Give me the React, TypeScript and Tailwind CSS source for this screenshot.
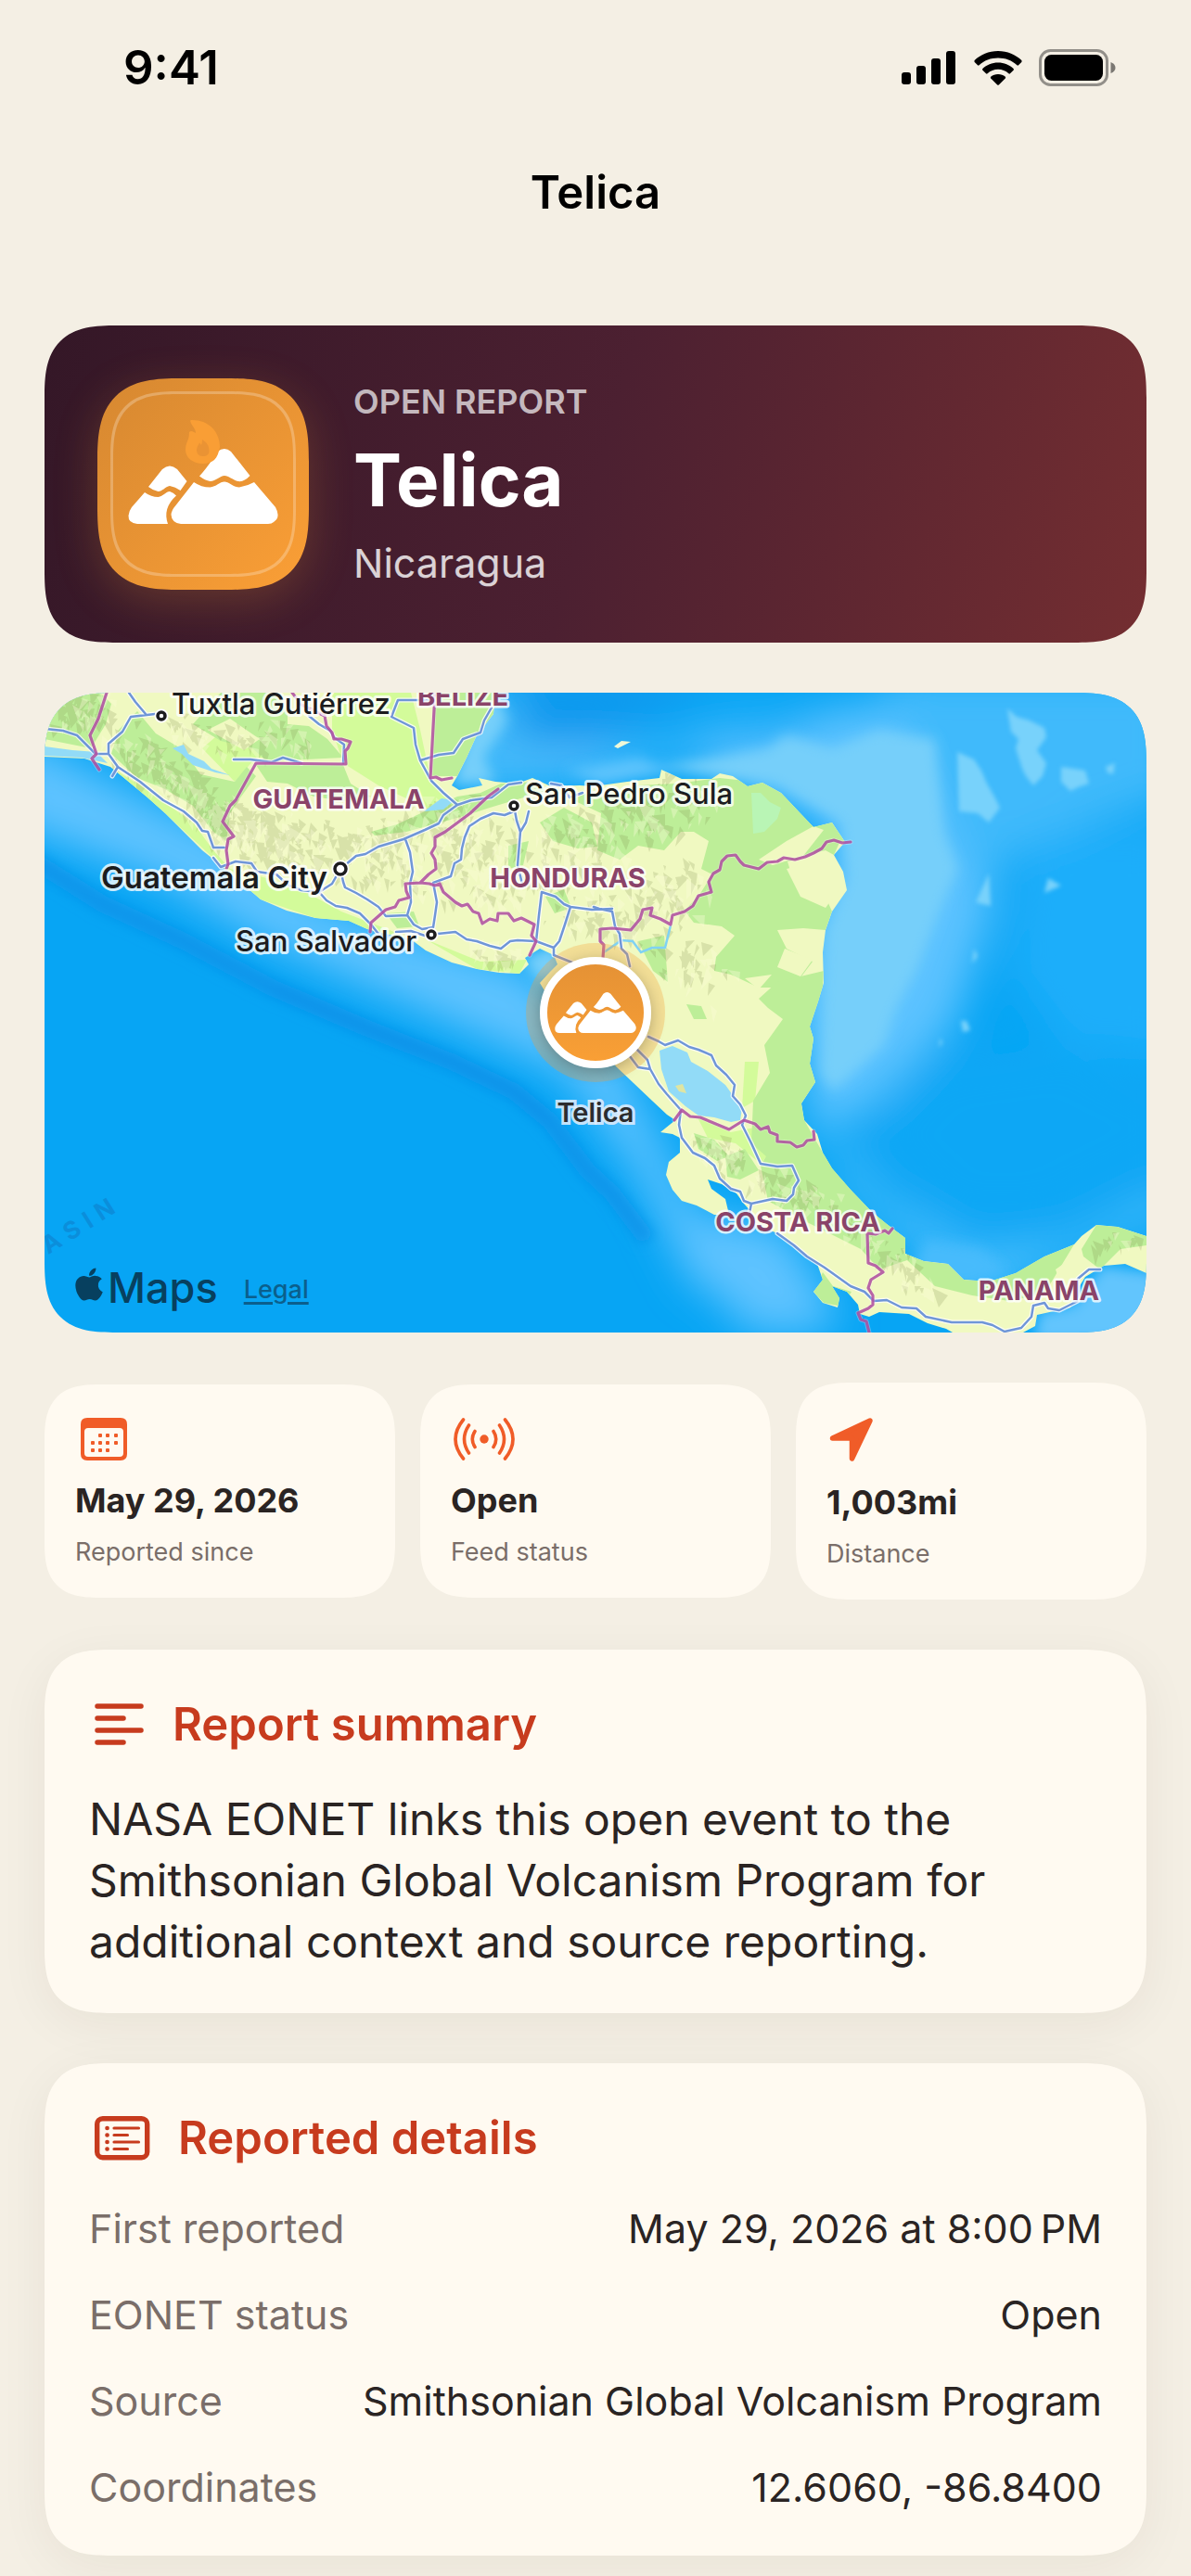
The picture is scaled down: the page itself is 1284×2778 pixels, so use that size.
// src/App.tsx
import React from 'react';
import { FaApple } from 'react-icons/fa';

type Point = [number, number];

const LAND =
  'M0 0V69L43 71L71 80L87 93L111 113L130 130L150 150L170 170L190 186L213 206L233 223L261 235L292 243L328 246L348 255L368 260L395 266L411 278L439 291L466 298L490 302L512 303L522 293L518 286L534 276L549 283L553 293L545 301L534 313L540 323L570 345L595 372L616 403L635 421L655 440L671 455L680 461L664 474L677 476L685 480V496L673 506L670 520L677 536L687 548L703 553L722 563L738 563L734 546L719 535L715 525L730 530L746 540L754 551L762 560L766 573L790 583L813 600L833 616L839 633L829 646L839 658L855 663L857 653L849 640L865 646L877 660L879 670L889 673L900 668L932 670L952 680L972 686L979 690H1055L1068 683L1070 671L1106 663L1114 643L1122 630L1142 618L1165 616L1188 626V586L1157 576L1134 574L1118 586L1110 595L1078 608L1047 626L1019 635L991 633L974 616L948 613L928 605V588L908 573L892 560L869 536L849 513L839 496L833 476L819 461L816 443L831 420L825 400L829 373L825 360L834 333L840 313L839 280L842 256L849 236L865 213L861 193L851 175L863 161L849 140L829 145L811 126L794 108L774 97L758 101L742 90L728 87L719 93L687 93L665 83L663 92L628 96L592 101L577 100L546 101L526 92L510 98L486 96L468 92L472 100L447 105L439 100L445 90L455 70L466 46L484 23L486 0Z';

const GREEN_AREAS = [
  'M0 0L60 0L72 12L66 34L50 60L0 50Z',
  'M72 66L80 40L100 20L120 44L150 62L168 88L205 96L218 80L228 90L212 112L200 130L196 160L182 150L160 122L130 104L100 92Z',
  'M160 34L190 0L250 0L262 20L262 34L285 36L305 50L322 70L240 74L224 60L190 52Z',
  'M228 78H322L330 98L352 112L330 118L290 112L262 98L240 96Z',
  'M421 0H486L484 23L466 46L455 70L445 90L418 90Z',
  'M352 150L380 142L410 128L445 112L470 108L492 98L530 96L540 106L480 124L455 132L420 142L390 150L356 154Z',
  'M540 102L600 112L640 100L680 98L728 92L774 97L794 108L826 134L860 155L851 175L842 170L800 180L772 180L790 162L829 144L849 140L863 161L840 162L812 180L801 182L808 205L842 220L849 236L842 256L818 254L790 256L800 276L828 290L816 306L790 318L770 318L740 304L722 300L724 285L744 262L730 252L700 248L690 235L706 218L720 196L708 190L716 160L700 150L686 150L668 170L640 165L620 180L596 170L600 130Z',
  'M770 330L790 312L840 300L838 333L829 373L831 420L816 443L819 461L839 496L892 560L928 588V605L948 613L974 616L991 633L1019 635L1078 608L1110 595L1078 648L1040 656L1000 650L960 640L930 612L900 622L880 600L852 586L820 570L780 548L772 510L778 500L762 486L764 440L782 410L776 380L796 352L780 340Z',
  'M734 500L755 492L770 515L750 525L736 522Z',
  'M700 475L722 482L738 500L725 505L705 492Z',
  'M829 646L839 625L850 640L870 646L860 662L840 658Z',
  'M1118 600L1134 574L1157 576L1188 586V596L1160 600L1138 622L1120 608Z',
  'M534 140L560 124L590 140L596 166L575 168L548 160Z',
  'M500 165L522 160L516 186L500 190Z',
  'M540 220L560 212L568 232L550 238Z',
  'M368 238L398 236L404 252L380 254Z',
  'M692 336L708 338L714 352L700 352Z',
  'M640 268L668 262L672 312L656 300Z',
];

const BRIGHT_AREAS = [
  'M71 80L111 105L160 140L182 170L200 190L240 200L280 214L320 236L372 256L395 266L348 255L292 243L233 223L190 186L130 130Z',
  'M310 0H395L405 40L416 92L440 116L420 128L360 100L322 76L310 40Z',
  'M411 266L470 290L520 288L512 303L466 298Z',
  'M755 398H770L766 440L752 448Z',
  'M704 458L740 474L770 468L790 486L772 508L745 486L715 480Z',
  'M810 505H838L845 524L815 522Z',
  'M170 60L205 30L260 34L320 70H228L205 96Z',
];

const SAND_AREAS = [
  'M176 40L200 28L232 50L215 62Z',
  'M770 180L800 160L829 144L840 148L818 176L785 186Z',
  'M800 190L842 180L862 205L842 232L815 220Z',
  'M798 276L828 288L815 306L790 296Z',
  'M755 308L784 304L770 320Z',
  'M1090 622L1104 612L1122 622L1112 640L1096 640Z',
];

const SHOALS = [
  'M1038 17L1048 26L1062 30L1078 38L1080 48L1070 62L1080 76L1076 90L1066 100L1058 90L1054 82L1047 60L1050 50L1042 42Z',
  'M1096 80L1110 82L1122 84L1126 98L1114 102L1106 106L1096 96Z',
  'M1144 80L1154 76L1152 88L1146 86Z',
  'M984 64L1002 72L1010 84L1016 98L1024 112L1030 124L1018 140L1006 130L986 128Z',
  'M1018 195L1020 230L1004 226Z',
  'M1082 200L1096 208L1078 216Z',
  'M1002 276L1006 284L1000 292Z',
  'M994 354L998 364L990 366L988 354Z',
  'M966 372L968 378L964 382Z',
];

const BORDERS = [
  'M67 0L58 28L49 46L56 66L51 71L59 83',
  'M267 0L277 13L302 25L304 36L310 43L312 50L320 50L330 53L327 60L324 63L325 77L228 76L217 96L206 116L200 122L192 139L204 155L198 158L196 170L198 185L196 190',
  'M421 0L416 92L422 91L428 94L439 92',
  'M489 104L478 112L459 130L432 150L421 156L421 166L417 173L421 180L422 190L414 196L405 205L389 206L390 214L393 221L382 224L378 231L368 234L352 248L351 258',
  'M405 205L415 206L421 208L426 206L430 215L443 226L450 230L456 228L462 236L468 238L472 249L480 244L488 246L489 238L494 238L500 238L506 246L514 243L528 250L525 262L530 268L523 283',
  'M602 286L603 272L599 268L599 255L612 254L632 256L642 244L645 234L655 232L653 240L664 244L675 250L677 240L690 236L699 230L705 219L719 215L716 204L721 195L728 191L730 182L736 176L745 175L750 182L754 186L770 190L779 183L790 182L797 178L809 180L820 177L829 173L838 168L843 161L851 159L860 162L869 161',
  'M679 461L687 450L696 457L707 458L738 471L754 461L766 465L772 471L780 468L782 474L790 477L790 484L804 485L811 490L818 488L822 483L830 482L829 473',
  'M914 578L910 583L906 580L896 584L887 583L888 615L896 618L904 625L891 633L888 642L893 650V660L888 664L877 669L880 676L886 678L889 690',
];

const ROADS = [
  'M1 39L20 41L35 46L45 56L55 66H69V55L84 42L93 26L119 23',
  'M91 0L98 10L109 23',
  'M55 66L69 66L79 80L103 96L128 116L150 128L164 140L170 149L176 150L182 167H194',
  'M79 80L73 90',
  'M182 178L190 188L206 182L223 184L229 193L250 196L262 207L277 213L296 215L304 224L314 230L326 232L340 238L352 250L360 260',
  'M204 72L222 72L245 75L257 70L277 76',
  'M285 25L296 34L308 41L312 48L323 56L322 76',
  'M420 8H381L374 26L390 34L398 38L400 56L405 73L417 95L430 108L445 121',
  'M405 73L425 67L441 65L451 50L470 43L474 30L482 16',
  'M296 215L310 206L319 190L336 176L346 174L360 166L387 158L410 148L425 141L430 132L445 121L460 116L482 113L500 99L514 97',
  'M389 158L394 172L397 193L394 206L395 226L391 240',
  'M319 190L322 204L324 210L336 216L348 223L360 231L368 241L391 240L398 250L407 255L419 253',
  'M379 258L395 257L410 262L424 260L443 258L455 266L466 268L480 273L492 276L502 268L510 267L530 268L549 275L555 268L561 250L567 231L590 234L612 233',
  'M530 268L533 240L536 215L551 220L560 228L567 231',
  'M549 275V283L569 291',
  'M506 128L496 132L484 130L470 136L458 144L453 156L450 168L449 180L442 184L438 198L419 205L423 226L421 240L419 253',
  'M506 122L509 138L513 150L510 186L515 206',
  'M522 128L519 140L513 150',
  'M546 98L557 100L566 113L580 108',
  'M592 231L598 233L612 236L615 252L620 260L622 276L628 282L631 295',
  'M651 371L662 376L669 380L683 375L695 382L705 385L719 391L724 402L735 412L744 423L742 435L750 444L756 456L752 466L762 486L772 508L790 511L806 510L813 526L808 534L807 541L800 548L785 546L762 551L760 561',
  'M639 385L650 396L653 406L662 422L671 433L686 450L684 466L687 480L699 496L712 502L722 510L728 524L740 535L750 538L754 548L762 551',
  'M631 392L640 404L653 406',
  'M790 583L808 596L822 608L841 620L869 640L884 646L894 656L908 655L924 663L940 664L950 673L978 679L1011 679L1022 682L1035 689L1053 685L1064 673L1066 661L1078 658L1082 664L1094 666L1114 656V632L1126 622L1138 622',
];

const LAKES = [
  'M663 386L677 381L693 388L697 398L715 408L734 423L752 448L750 461L740 463L722 458L705 456L691 446L673 430L665 406Z',
  'M138 60L150 56L155 66L172 74L180 82L200 89L184 86L160 78L148 66Z',
  'M409 128L428 114L442 116L430 126Z',
  'M0 58L30 62L56 64L68 76L40 70L0 68Z',
];

// mountain ranges that get the faceted relief shading
const RIDGES: { line: Point[]; spread: number; count: number }[] = [
  { line: [[10, 20], [60, 10]], spread: 34, count: 60 },
  { line: [[80, 50], [130, 90], [180, 120], [200, 150]], spread: 42, count: 210 },
  { line: [[130, 30], [180, 50], [250, 40], [300, 60]], spread: 30, count: 70 },
  { line: [[200, 140], [250, 160], [320, 170], [400, 190]], spread: 56, count: 260 },
  { line: [[370, 150], [440, 130], [500, 160]], spread: 44, count: 110 },
  { line: [[430, 190], [500, 200], [560, 160], [620, 140], [700, 110]], spread: 60, count: 260 },
  { line: [[560, 230], [640, 240], [690, 200]], spread: 54, count: 120 },
  { line: [[650, 290], [700, 280], [730, 330]], spread: 46, count: 40 },
  { line: [[700, 480], [740, 505], [790, 530], [840, 550], [900, 600], [960, 645]], spread: 28, count: 160 },
  { line: [[460, 275], [510, 285]], spread: 20, count: 26 },
  { line: [[1130, 590], [1170, 590]], spread: 16, count: 14 },
];

function buildFacets() {
  let seed = 7;
  const rand = () => {
    seed = (seed * 16807) % 2147483647;
    return seed / 2147483647;
  };
  let dark = '';
  let light = '';
  RIDGES.forEach(({ line, spread, count }) => {
    for (let i = 0; i < count; i++) {
      const seg = Math.floor(rand() * (line.length - 1));
      const t = rand();
      const [x1, y1] = line[seg];
      const [x2, y2] = line[seg + 1];
      const x = Math.round(x1 + (x2 - x1) * t + (rand() - 0.5) * spread);
      const y = Math.round(y1 + (y2 - y1) * t + (rand() - 0.5) * spread);
      const s = 5 + rand() * 9;
      const tri = `M${x} ${y}l${Math.round(s * (0.3 + rand()))} ${Math.round(s * (rand() - 0.2))}l${-Math.round(s * rand())} ${Math.round(s)}z`;
      if (rand() > 0.4) dark += tri;
      else light += tri;
    }
  });
  return { dark, light };
}

const facets = buildFacets();

const CITIES = [
  { name: 'Tuxtla Gutiérrez', x: 137, y: 23, dot: [126, 25], r: 4, cls: 'text-[31px] font-medium' },
  { name: 'San Pedro Sula', x: 518, y: 120, dot: [506, 122], r: 4, cls: 'text-[31px] font-medium' },
  { name: 'Guatemala City', x: 61, y: 211, dot: [319, 190], r: 6, cls: 'text-[33px] font-semibold' },
  { name: 'San Salvador', x: 206, y: 279, dot: [417, 261], r: 4, cls: 'text-[31px] font-medium' },
];

const COUNTRIES = [
  { name: 'BELIZE', x: 451, y: 14 },
  { name: 'GUATEMALA', x: 317, y: 125 },
  { name: 'HONDURAS', x: 564, y: 210 },
  { name: 'COSTA RICA', x: 812, y: 581 },
  { name: 'PANAMA', x: 1072, y: 655 },
];

const DETAILS = [
  { label: 'First reported', value: 'May 29, 2026 at 8:00\u2009PM' },
  { label: 'EONET status', value: 'Open' },
  { label: 'Source', value: 'Smithsonian Global Volcanism Program' },
  { label: 'Coordinates', value: '12.6060, -86.8400' },
];

function Mountains() {
  return (
    <g fill="#fff">
      <path d="M110 105.5C117 98 123 89 129.500 79Q137 73 144 79L164.500 105Q158 112 152 111C146 110 142 105 137 105S128 111 121.500 111Q116 110 110 105.500Z" />
      <path d="M104 112Q112 117.500 121.500 117.500C128 117 132 111.500 137 111.500S146 117.500 153 117.500Q162 116 169 112L192 139Q198 150 190 155Q188 157 184 157H90Q80 156 79.500 147Q80 142 84.500 137Z" />
      <path d="M55 117L70 98Q78 91 86 98L96.500 111L89.500 121Q84 117 78 116C73 117 70 122 65.500 122Q60 121 55 117Z" />
      <path d="M51 123Q58 128 65.500 128C71 127 74 122 78 122Q82 123 85 126.500Q70 140 76 157H43Q33 156 33.500 148Q34 143 37 139Z" />
    </g>
  );
}

function CityMap() {
  return (
    <svg className="block h-full w-full" viewBox="0 0 1188 690" preserveAspectRatio="xMidYMid slice" aria-label="Map of Central America">
      <defs>
        <clipPath id="land-clip">
          <path d={LAND} />
        </clipPath>
        <filter id="soft-lg" x="-20%" y="-20%" width="140%" height="140%">
          <feGaussianBlur stdDeviation="22" />
        </filter>
        <filter id="soft-sm" x="-20%" y="-20%" width="140%" height="140%">
          <feGaussianBlur stdDeviation="7" />
        </filter>
        <filter id="soft-xs" x="-20%" y="-20%" width="140%" height="140%">
          <feGaussianBlur stdDeviation="2" />
        </filter>
      </defs>

      {/* ocean floor */}
      <rect width="1188" height="690" fill="#07a5f4" />
      <g filter="url(#soft-lg)">
        <path d="M-40 40L200 160L300 230L520 300L620 400L700 560L800 580L860 680L700 640L640 520L560 410L400 340L240 270L120 200L-40 140Z" fill="#5ec3ff" />
        <path d="M660 480L680 560L780 600L850 690H760L680 600Z" fill="#5ec3ff" />
        <path d="M430 110L520 60L700 60L800 20L960 10L1030 120L1020 240L980 360L900 440L830 480L800 300L850 150L700 70Z" fill="#5cc2ff" />
        <path d="M900 -20H1220V110L1080 160L1000 200Z" fill="#40bafb" />
        <path d="M440 110L480 0L560 0L540 80Z" fill="#46bbfb" />
        <path d="M830 440L870 540L940 600L1010 650L1120 600L1220 560V530L1100 590L1000 600L900 540Z" fill="#4fbffd" />
        <path d="M880 480L960 400L1100 380L1220 440V500L1080 570L980 570Z" fill="#0fa7f5" />
        <path d="M1060 160L1220 140V400L1100 380L1040 300Z" fill="#1eaefa" />
        <path d="M500 50L520 -20H740L640 30L580 60Z" fill="#0d99ee" />
        <path d="M660 50L740 20H860L780 60Z" fill="#27b0f9" />
      </g>
      <g filter="url(#soft-sm)">
        <path d="M-20 176L63 228L150 268L245 318L348 362L439 398L506 430L545 462L585 515L612 540L650 590" fill="none" stroke="#0e92e9" strokeWidth="18" strokeLinejoin="round" opacity=".85" />
        <path d="M245 318L348 362L439 398L506 430L545 462" fill="none" stroke="#0e92e9" strokeWidth="14" strokeLinejoin="round" />
        <path d="M660 80L780 60L800 46L850 60L900 40L960 50L970 150L985 190L965 235L940 300L918 340L905 380L850 430L836 410L842 256L865 200L858 140L790 100Z" fill="#76cffa" />
        <path d="M560 84L640 70L680 84L600 98Z" fill="#5fc4fd" />
        <path d="M936 620L990 640L1040 626L1010 600L950 590Z" fill="#46bbfc" />
        <path d="M1066 700L1072 668L1110 660L1140 618L1200 626V700Z" fill="#62c5fd" />
        <path d="M516 286L552 270L560 310L530 310Z" fill="#76cffa" />
        <path d="M486 96L474 70L500 30L488 0H470L440 100Z" fill="#76cffa" />
      </g>
      <g filter="url(#soft-xs)">
        {SHOALS.map((d) => (
          <path key={d} d={d} fill="#78d2fb" />
        ))}
      </g>
      <path d="M614 58L622 52L632 53L618 60Z" fill="#eef8d8" />

      {/* land cover */}
      <path d={LAND} fill="#f0f9c1" />
      <g clipPath="url(#land-clip)">
        {BRIGHT_AREAS.map((d) => (
          <path key={d} d={d} fill="#d3fb9a" />
        ))}
        {GREEN_AREAS.map((d) => (
          <path key={d} d={d} fill="#bdee98" />
        ))}
        {SAND_AREAS.map((d) => (
          <path key={d} d={d} fill="#f0f9c1" />
        ))}
        <path d="M762 108H772L782 118L794 124L790 136L776 150L764 152Z" fill="#b9f5b5" />
        <path d={facets.dark} fill="#6f7a3c" opacity=".18" />
        <path d={facets.light} fill="#fdfbd9" opacity=".35" />
        {LAKES.map((d) => (
          <path key={d} d={d} fill="#92dbf7" />
        ))}
        <path d="M680 424L688 422L692 432L684 430Z" fill="#dfe5a2" />
      </g>

      <path d="M603 280L622 267L634 268L643 280L655 275H669L675 251" fill="none" stroke="#7fd2f3" strokeWidth="2.500" />
      <g fill="none" strokeLinejoin="round" strokeLinecap="round">
        <path d={ROADS.join('')} stroke="#fff" strokeWidth="5" opacity=".8" />
        <path d={ROADS.join('')} stroke="#6f96d8" strokeWidth="2.500" />
        <path d={BORDERS.join('')} stroke="#fff" strokeWidth="5" opacity=".3" />
        <path d={BORDERS.join('')} stroke="#ad4a9d" strokeWidth="3.200" opacity=".85" />
      </g>

      {/* labels */}
      <g className="text-[29px] font-bold" fill="#8a4369" stroke="#fff" strokeOpacity=".8" strokeWidth="5" strokeLinejoin="round" paintOrder="stroke" textAnchor="middle">
        {COUNTRIES.map((c) => (
          <text key={c.name} x={c.x} y={c.y}>
            {c.name}
          </text>
        ))}
      </g>
      {CITIES.map((c) => (
        <g key={c.name}>
          <circle cx={c.dot[0]} cy={c.dot[1]} r={c.r} fill="#fff" stroke="#fff" strokeWidth="7" />
          <circle cx={c.dot[0]} cy={c.dot[1]} r={c.r} fill="#fff" stroke="#1c1c1e" strokeWidth="3.500" />
          <text className={c.cls} x={c.x} y={c.y} fill="#1c1c1e" stroke="#fff" strokeOpacity=".8" strokeWidth="6" strokeLinejoin="round" paintOrder="stroke">
            {c.name}
          </text>
        </g>
      ))}
      <text className="text-[26px] font-bold tracking-[8px]" transform="translate(4 606) rotate(-32)" fill="#0b8edb">
        ASIN
      </text>
    </svg>
  );
}

function MapCard() {
  return (
    <section className="relative h-[690px] overflow-hidden rounded-[58px] supports-[corner-shape:squircle]:rounded-[78px] supports-[corner-shape:squircle]:[corner-shape:superellipse(1.5)]">
      <CityMap />
      <div className="absolute top-1/2 left-1/2 flex size-[150px] -translate-1/2 items-center justify-center rounded-full bg-[#f89f35]/30">
        <div className="flex size-[120px] items-center justify-center rounded-full border-8 border-white bg-linear-to-b from-[#e59235] to-[#f99f35] shadow-[0_4px_16px_rgba(0,0,0,0.25)]">
          <svg className="w-[88px]" viewBox="33 74 162 84">
            <Mountains />
          </svg>
        </div>
      </div>
      <p className="absolute top-[433px] left-1/2 -translate-x-1/2 text-[29px] leading-[40px] font-semibold text-[#2c2c2e] [-webkit-text-stroke:6px_rgba(228,238,252,0.85)] [paint-order:stroke]">
        Telica
      </p>
      <div className="absolute bottom-5 left-7 flex items-center text-[#07405f]">
        <FaApple className="-mt-2 size-10" />
        <span className="text-[45px] leading-[56px] font-medium">Maps</span>
        <a href="#legal" className="mt-1 ml-7 text-[27px] font-medium text-[#0b5f8c] underline decoration-[3px] underline-offset-4">
          Legal
        </a>
      </div>
    </section>
  );
}

function CalendarIcon() {
  const dots: Point[] = [[21, 19], [29, 19], [38, 19], [13, 27], [21, 27], [29, 27], [38, 27], [13, 35], [21, 35], [29, 35]];
  return (
    <svg className="ml-1.5 h-[46px] w-[50px]" viewBox="0 0 50 46" fill="#f05c28">
      <path fillRule="evenodd" d="M7 0H43Q50 0 50 7V39Q50 46 43 46H7Q0 46 0 39V7Q0 0 7 0ZM8 11Q4 11 4 15V38Q4 42 8 42H42Q46 42 46 38V15Q46 11 42 11Z" />
      {dots.map(([x, y]) => (
        <rect key={`${x}-${y}`} x={x - 2} y={y - 2} width="4" height="4" rx="1" />
      ))}
    </svg>
  );
}

function BroadcastIcon() {
  return (
    <svg className="ml-[3px] h-[46px] w-[66px]" viewBox="0 0 66 46" fill="none" stroke="#f05c28" strokeWidth="3.600" strokeLinecap="round">
      <circle cx="33" cy="23" r="4.700" fill="#f05c28" stroke="none" />
      <path d="M23 14.500Q17.500 23 23 31.500M16.500 8Q6.500 23 16.500 38M10.500 2Q-6.500 23 10.500 44" />
      <path d="M43 14.500Q48.500 23 43 31.500M49.500 8Q59.500 23 49.500 38M55.500 2Q72.500 23 55.500 44" />
    </svg>
  );
}

function LocationIcon() {
  return (
    <svg className="ml-[3px] h-[50px] w-12" viewBox="0 0 48 50">
      <path d="M44 5L24.500 46V24H3.500Z" fill="#f05c28" stroke="#f05c28" strokeWidth="5.500" strokeLinejoin="round" />
    </svg>
  );
}

function StatCard({ icon, value, label }: { icon: React.ReactNode; value: string; label: string }) {
  return (
    <div className="rounded-[46px] bg-[#fffaf1] px-[33px] pt-9 pb-8 supports-[corner-shape:squircle]:rounded-[62px] supports-[corner-shape:squircle]:[corner-shape:superellipse(1.5)]">
      {icon}
      <p className="mt-5 text-[36px] leading-[46px] font-bold text-[#2a2423]">{value}</p>
      <p className="mt-4 text-[27px] leading-[34px] text-[#7a6e69]">{label}</p>
    </div>
  );
}

function Card({ title, icon, children }: { title: string; icon: React.ReactNode; children: React.ReactNode }) {
  return (
    <section className="rounded-[54px] bg-[#fffaf1] px-12 pt-[50px] pb-11 shadow-[0_12px_54px_rgba(50,40,20,0.06)] supports-[corner-shape:squircle]:rounded-[72px] supports-[corner-shape:squircle]:[corner-shape:superellipse(1.5)]">
      <h2 className="flex items-center gap-[30px] text-[49px] leading-[62px] font-semibold text-[#c73b1e]">
        {icon}
        {title}
      </h2>
      {children}
    </section>
  );
}

function StatusBar() {
  return (
    <div className="flex items-center justify-between pt-[42px] pr-20 pl-[133px]">
      <span className="text-[51px] leading-[62px] font-semibold">9:41</span>
      <div className="flex items-center gap-[18px]">
        <svg className="h-[38px] w-[60px]" viewBox="0 0 60 38">
          <rect x="0" y="24" width="10" height="13" rx="3" />
          <rect x="16" y="17" width="10" height="20" rx="3" />
          <rect x="32" y="9" width="10" height="28" rx="3" />
          <rect x="48" y="1" width="10" height="36" rx="3" />
        </svg>
        <svg className="h-[38px] w-[52px]" viewBox="0 0 52 38">
          <path d="M26 1C36 1 45 5 51.300 11Q52 12 51.300 13L48 16.300Q47.200 17 46.400 16.300C41 11.200 34 8.500 26 8.500S11 11.200 5.600 16.300Q4.800 17 4 16.300L.7 13Q0 12 .7 11C7 5 16 1 26 1Z" />
          <path d="M26 13.500C32.500 13.500 38.300 16 42.600 20Q43.400 21 42.600 21.800L39 25.300Q38.200 26 37.400 25.300C34.300 22.500 30.300 20.800 26 20.800S17.700 22.500 14.600 25.300Q13.800 26 13 25.300L9.400 21.800Q8.600 21 9.400 20C13.700 16 19.500 13.500 26 13.500Z" />
          <path d="M26 26C29 26 31.700 27 33.800 28.800Q34.600 29.700 33.800 30.500L26.800 37.400Q26 38 25.200 37.400L18.200 30.500Q17.400 29.700 18.200 28.800C20.300 27 23 26 26 26Z" />
        </svg>
        <svg className="h-10 w-[84px]" viewBox="0 0 84 40">
          <rect x="1.500" y="1.500" width="72" height="37" rx="11" fill="none" stroke="#000" strokeOpacity=".4" strokeWidth="3" />
          <rect x="6" y="6" width="63" height="28" rx="7.500" />
          <path d="M77.500 14Q82.500 16 82.500 20T77.500 26Z" fillOpacity=".5" />
        </svg>
      </div>
    </div>
  );
}

export default function App() {
  return (
    <div className="min-h-screen bg-[#f4efe4] pb-5 font-['Inter','Noto_Sans',sans-serif] text-black">
      <StatusBar />
      <h1 className="mt-[73px] text-center text-[49px] leading-[62px] font-semibold">Telica</h1>

      <main className="mt-[112px] flex flex-col gap-[54px] px-12">
        <section className="flex items-center gap-12 rounded-[58px] bg-[linear-gradient(106deg,#341727_0%,#4c2031_50%,#742e31_100%)] p-[57px] supports-[corner-shape:squircle]:rounded-[78px] supports-[corner-shape:squircle]:[corner-shape:superellipse(1.5)]">
          <div className="relative size-[228px] shrink-0 rounded-[66px] bg-linear-to-br from-[#d68831] to-[#fb9f36] shadow-[0_12px_48px_rgba(248,159,53,0.22)] supports-[corner-shape:squircle]:rounded-[90px] supports-[corner-shape:squircle]:[corner-shape:superellipse(1.5)]">
            <svg className="size-full" viewBox="0 0 228 228">
              <Mountains />
              <path d="M100.500 45C118 44 132 56 132 74C131 80 129 85 126 88Q121 92 114 92C102 92 95 85 95 77C95 68 99 68 99 58Q101 56 104 58L106 59C106 53 99 49 100.500 45Z" fill="#f99e35" />
              <path d="M113 66C118 69 120.500 73 120.500 78C120.500 82 118 84 113.500 84C109 84 107 81 107 77C107 74 109 72 110 69.500L112 72Q113 70 113 66Z" fill="#ea9334" />
            </svg>
            <div className="absolute inset-[14px] rounded-[54px] border-[3px] border-white/25 supports-[corner-shape:squircle]:rounded-[74px] supports-[corner-shape:squircle]:[corner-shape:superellipse(1.5)]" />
          </div>
          <div>
            <p className="text-[36px] leading-[48px] font-semibold text-white/70">OPEN REPORT</p>
            <h2 className="mt-4 text-[78px] leading-[90px] font-bold text-white">Telica</h2>
            <p className="mt-4 text-[43px] leading-[56px] text-white/80">Nicaragua</p>
          </div>
        </section>

        <MapCard />

        <section className="grid grid-cols-3 items-center gap-[27px]">
          <StatCard icon={<CalendarIcon />} value="May 29, 2026" label="Reported since" />
          <StatCard icon={<BroadcastIcon />} value="Open" label="Feed status" />
          <StatCard icon={<LocationIcon />} value="1,003mi" label="Distance" />
        </section>

        <Card
          title="Report summary"
          icon={
            <svg className="ml-1.5 h-[46px] w-[54px]" viewBox="0 0 54 46" fill="none" stroke="#c73b1e" strokeWidth="5.500" strokeLinecap="round">
              <path d="M3 3H50M3 16H31M3 29H50M3 42H31" />
            </svg>
          }
        >
          <p className="mt-[38px] max-w-[1000px] text-[48px] leading-[66px] text-[#2a2423]">
            NASA EONET links this open event to the Smithsonian Global Volcanism Program for additional context and source reporting.
          </p>
        </Card>

        <Card
          title="Reported details"
          icon={
            <svg className="ml-1.5 h-12 w-[60px]" viewBox="0 0 60 48" fill="none" stroke="#c73b1e" strokeLinecap="round">
              <rect x="2.700" y="2.700" width="54" height="42" rx="6" strokeWidth="5.400" />
              <path d="M21 13H47.500M21 20.500H35.500M21 28H47.500M21 35.500H35.500" strokeWidth="3.200" />
              <path d="M13.500 13H13.600M13.500 20.500H13.600M13.500 28H13.600M13.500 35.500H13.600" strokeWidth="4.600" />
            </svg>
          }
        >
          <dl className="mt-9 flex flex-col gap-[33px]">
            {DETAILS.map((row) => (
              <div key={row.label} className="flex justify-between gap-6 text-[43px] leading-[60px]">
                <dt className="text-[#7a6e69]">{row.label}</dt>
                <dd className="text-right text-[#2a2423]">{row.value}</dd>
              </div>
            ))}
          </dl>
        </Card>
      </main>
    </div>
  );
}
